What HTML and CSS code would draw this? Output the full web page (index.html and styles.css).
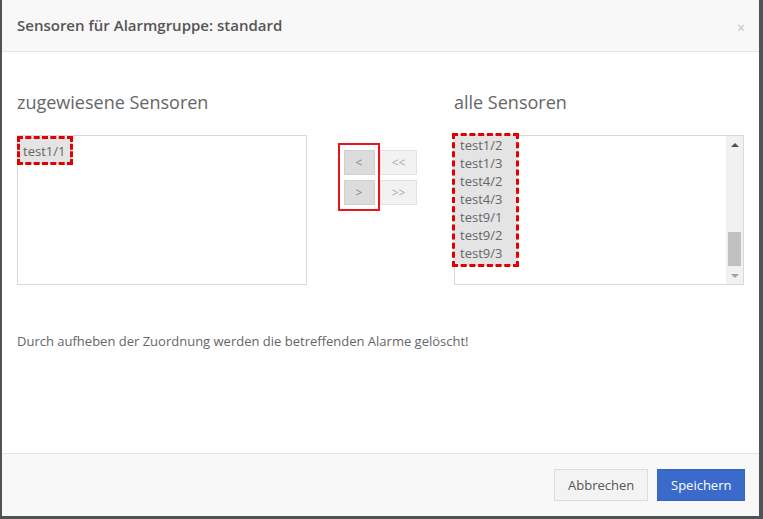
FILE: index.html
```html
<!DOCTYPE html>
<html lang="de">
<head>
<meta charset="utf-8">
<title>Sensoren für Alarmgruppe</title>
<link rel="stylesheet" href="styles.css">
</head>
<body>
<div class="modal">
  <div class="modal-header">
    <h4 class="modal-title">Sensoren für Alarmgruppe: standard</h4>
    <span class="close">×</span>
  </div>
  <div class="modal-body">
    <div class="columns">
      <div class="col">
        <h3 class="col-title">zugewiesene Sensoren</h3>
        <div class="listbox">
          <div class="opt-group opt-group-left">
            <div class="opt">test1/1</div>
          </div>
        </div>
      </div>
      <div class="mid">
        <div class="btn-grid">
          <div class="red-box">
            <span class="mv mv-active">&lt;</span>
            <span class="mv mv-active">&gt;</span>
          </div>
          <div class="plain-box">
            <span class="mv">&lt;&lt;</span>
            <span class="mv">&gt;&gt;</span>
          </div>
        </div>
      </div>
      <div class="col">
        <h3 class="col-title">alle Sensoren</h3>
        <div class="listbox listbox-scroll">
          <div class="opt-group opt-group-right">
            <div class="opt">test1/2</div>
            <div class="opt">test1/3</div>
            <div class="opt">test4/2</div>
            <div class="opt">test4/3</div>
            <div class="opt">test9/1</div>
            <div class="opt">test9/2</div>
            <div class="opt">test9/3</div>
          </div>
          <div class="scrollbar">
            <span class="arrow arrow-up"></span>
            <span class="thumb"></span>
            <span class="arrow arrow-down"></span>
          </div>
        </div>
      </div>
    </div>
    <p class="note">Durch aufheben der Zuordnung werden die betreffenden Alarme gelöscht!</p>
  </div>
  <div class="modal-footer">
    <button class="btn btn-default">Abbrechen</button>
    <button class="btn btn-primary">Speichern</button>
  </div>
</div>
</body>
</html>
```
FILE: styles.css
```css
html, body {
  margin: 0;
  padding: 0;
}
body {
  background: #4f5357;
  font-family: "Open Sans", "Noto Sans", sans-serif;
  color: #666;
  height: 519px;
  overflow: hidden;
}
.modal {
  margin-left: 2px;
  width: 757px;
  height: 516px;
  background: #fff;
  display: flex;
  flex-direction: column;
}
.modal-header {
  height: 52px;
  box-sizing: border-box;
  background: #f8f8f8;
  border-bottom: 1px solid #e5e5e5;
  display: flex;
  align-items: center;
  justify-content: space-between;
  padding: 0 14px 0 15px;
}
.modal-title {
  margin: 0;
  font-size: 15px;
  font-weight: 600;
  color: #555;
  padding-bottom: 2px;
}
.close {
  font-size: 14px;
  color: #c4c4c4;
  line-height: 1;
  padding-top: 4px;
}
.modal-body {
  flex: 1;
  padding: 0 15px;
}
.columns {
  display: grid;
  grid-template-columns: 290px 147px 290px;
  margin-top: 38px;
}
.col-title {
  margin: 0;
  font-size: 18px;
  font-weight: 400;
  color: #666;
  line-height: 24px;
  height: 45px;
}
.listbox {
  height: 150px;
  box-sizing: border-box;
  border: 1px solid #d9d9d9;
  position: relative;
}
.opt-group {
  position: absolute;
  background: #e4e4e4;
  outline: 3px dashed #e30000;
  outline-offset: -2px;
}
.opt-group-left {
  left: 0;
  top: 1px;
  width: 54px;
  height: 27px;
  padding-top: 5px;
  box-sizing: border-box;
}
.opt-group-right {
  left: -2px;
  top: -2px;
  width: 65px;
  height: 132px;
  padding-top: 2px;
  box-sizing: border-box;
}
.opt {
  font-size: 13px;
  line-height: 18px;
  color: #666;
  padding-left: 5px;
}
.opt-group-right .opt {
  padding-left: 7px;
}
.scrollbar {
  position: absolute;
  right: 0;
  top: 0;
  bottom: 0;
  width: 17px;
  background: #f1f1f1;
  display: flex;
  flex-direction: column;
  align-items: center;
}
.arrow {
  width: 0;
  height: 0;
  border-left: 4px solid transparent;
  border-right: 4px solid transparent;
}
.arrow-up {
  border-bottom: 4px solid #505050;
  margin-top: 7px;
}
.arrow-down {
  border-top: 4px solid #a3a3a3;
  margin-top: 8px;
}
.thumb {
  width: 13px;
  height: 34px;
  background: #c1c1c1;
  margin-top: 85px;
}
.mid {
  padding-top: 8px;
  margin-top: 45px;
}
.btn-grid {
  display: flex;
  margin-left: 31px;
}
.red-box {
  width: 42px;
  height: 68px;
  box-sizing: border-box;
  border: 2px solid #e8141a;
  display: flex;
  flex-direction: column;
  align-items: center;
  gap: 5px;
  padding-top: 5px;
}
.plain-box {
  display: flex;
  flex-direction: column;
  gap: 5px;
  padding-top: 7px;
}
.mv {
  display: flex;
  align-items: center;
  justify-content: center;
  width: 31px;
  height: 25px;
  box-sizing: border-box;
  border: 1px solid #e2e2e2;
  background: #f2f2f2;
  font-size: 12px;
  color: #aaa;
}
.mv-active {
  background: #dcdcdc;
  border-color: #d0d0d0;
  color: #888;
}
.plain-box .mv {
  width: 37px;
}
.note {
  margin: 47px 0 0 0;
  font-size: 13px;
  line-height: 18px;
  color: #666;
}
.modal-footer {
  height: 63px;
  box-sizing: border-box;
  background: #f8f8f8;
  border-top: 1px solid #e5e5e5;
  display: flex;
  justify-content: flex-end;
  align-items: center;
  gap: 9px;
  padding-right: 14px;
}
.btn {
  font-family: "Open Sans", "Noto Sans", sans-serif;
  font-size: 13px;
  height: 32px;
  box-sizing: border-box;
  margin: 0;
  padding: 0 13px;
}
.btn-default {
  width: 94px;
  background: #f3f3f3;
  border: 1px solid #dcdcdc;
  color: #555;
}
.btn-primary {
  width: 88px;
  background: #3a6bcb;
  border: 1px solid #3563bd;
  color: #fff;
}
```
